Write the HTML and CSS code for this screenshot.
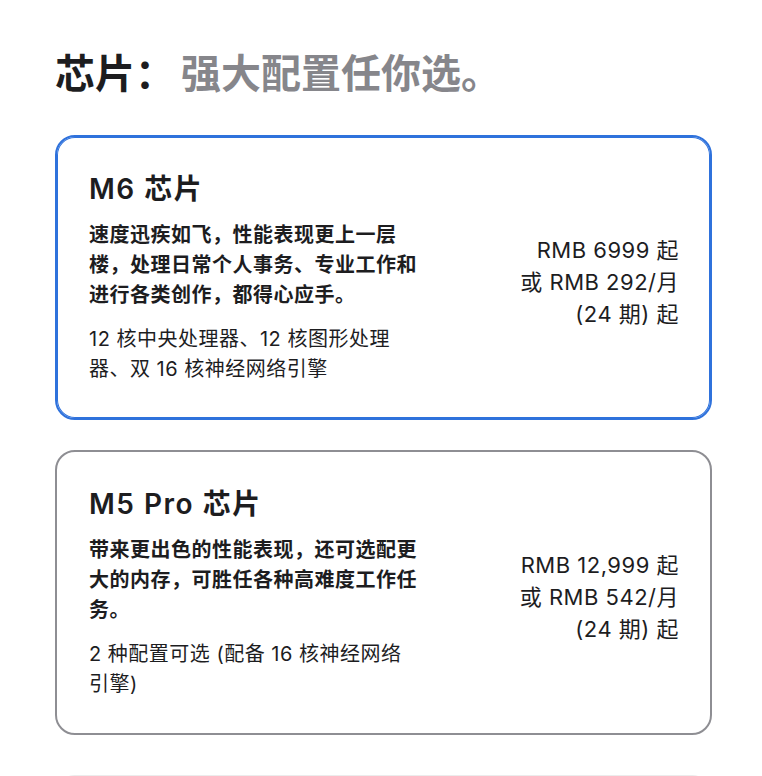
FILE: index.html
```html
<!DOCTYPE html>
<html lang="zh-CN">
<head>
  <meta charset="UTF-8" />
  <meta name="viewport" content="width=device-width, initial-scale=1.0" />
  <title>芯片：强大配置任你选。</title>
  <link rel="stylesheet" href="styles.css">
</head>
<body>
  <main class="chip-picker">
    <h2 class="section-title"><span class="title-strong">芯片：</span><span class="title-muted">强大配置任你选。</span></h2>

    <div class="options">
      <label class="option selected">
        <div class="option-info">
          <h3 class="option-name">M6 芯片</h3>
          <p class="option-desc">速度迅疾如飞，性能表现更上一层楼，处理日常个人事务、专业工作和进行各类创作，都得心应手。</p>
          <p class="option-spec">12 核中央处理器、12 核图形处理器、双 16 核神经网络引擎</p>
        </div>
        <div class="option-price">
          <span>RMB 6999 起</span>
          <span>或 RMB 292/月</span>
          <span>(24 期) 起</span>
        </div>
      </label>

      <label class="option">
        <div class="option-info">
          <h3 class="option-name">M5 Pro 芯片</h3>
          <p class="option-desc">带来更出色的性能表现，还可选配更大的内存，可胜任各种高难度工作任务。</p>
          <p class="option-spec">2 种配置可选 (配备 16 核神经网络引擎)</p>
        </div>
        <div class="option-price">
          <span>RMB 12,999 起</span>
          <span>或 RMB 542/月</span>
          <span>(24 期) 起</span>
        </div>
      </label>

      <label class="option option-next"></label>
    </div>
  </main>
</body>
</html>
```

FILE: styles.css
```css
body {
  margin: 0;
  font-family: Inter, "Noto Sans CJK SC", sans-serif;
  color: #1d1d1f;
  background: #fff;
}
.chip-picker {
  padding: 50px 50px 0 55px;
}
.section-title {
  margin: 0 0 37px;
  font-size: 40px;
  line-height: 48px;
  font-weight: 700;
}
.title-strong {
  color: #1d1d1f;
}
.title-muted {
  margin-left: 6px;
  color: #86868b;
}
.options {
  display: flex;
  flex-direction: column;
  gap: 30px;
}
.option {
  display: flex;
  justify-content: space-between;
  align-items: center;
  border: 2px solid #8e8e93;
  border-radius: 20px;
  padding: 35px 31px 34px 32px;
  cursor: pointer;
}
/* selected card gets a thicker blue ring without shifting the content */
.option.selected {
  border-color: #2f72dc;
  box-shadow: inset 0 0 0 1px #2f72dc;
}
.option-info {
  width: 330px;
}
.option-name {
  margin: 0;
  font-size: 28px;
  line-height: 34px;
  font-weight: 600;
  letter-spacing: 1.5px;
}
.option-desc {
  margin: 14px 0 0;
  font-size: 20px;
  line-height: 30px;
  font-weight: 700;
  letter-spacing: 0.5px;
}
.option-spec {
  margin: 14px 0 0;
  font-size: 20px;
  line-height: 30px;
  font-weight: 400;
  letter-spacing: 0.5px;
}
.option-price {
  display: flex;
  flex-direction: column;
  align-items: flex-end;
  font-size: 22px;
  line-height: 32px;
  letter-spacing: 0.5px;
  padding-top: 8px;
}
.option-next {
  margin-top: 10px;
  height: 120px;
  border: 1px solid #ececec;
}
```
